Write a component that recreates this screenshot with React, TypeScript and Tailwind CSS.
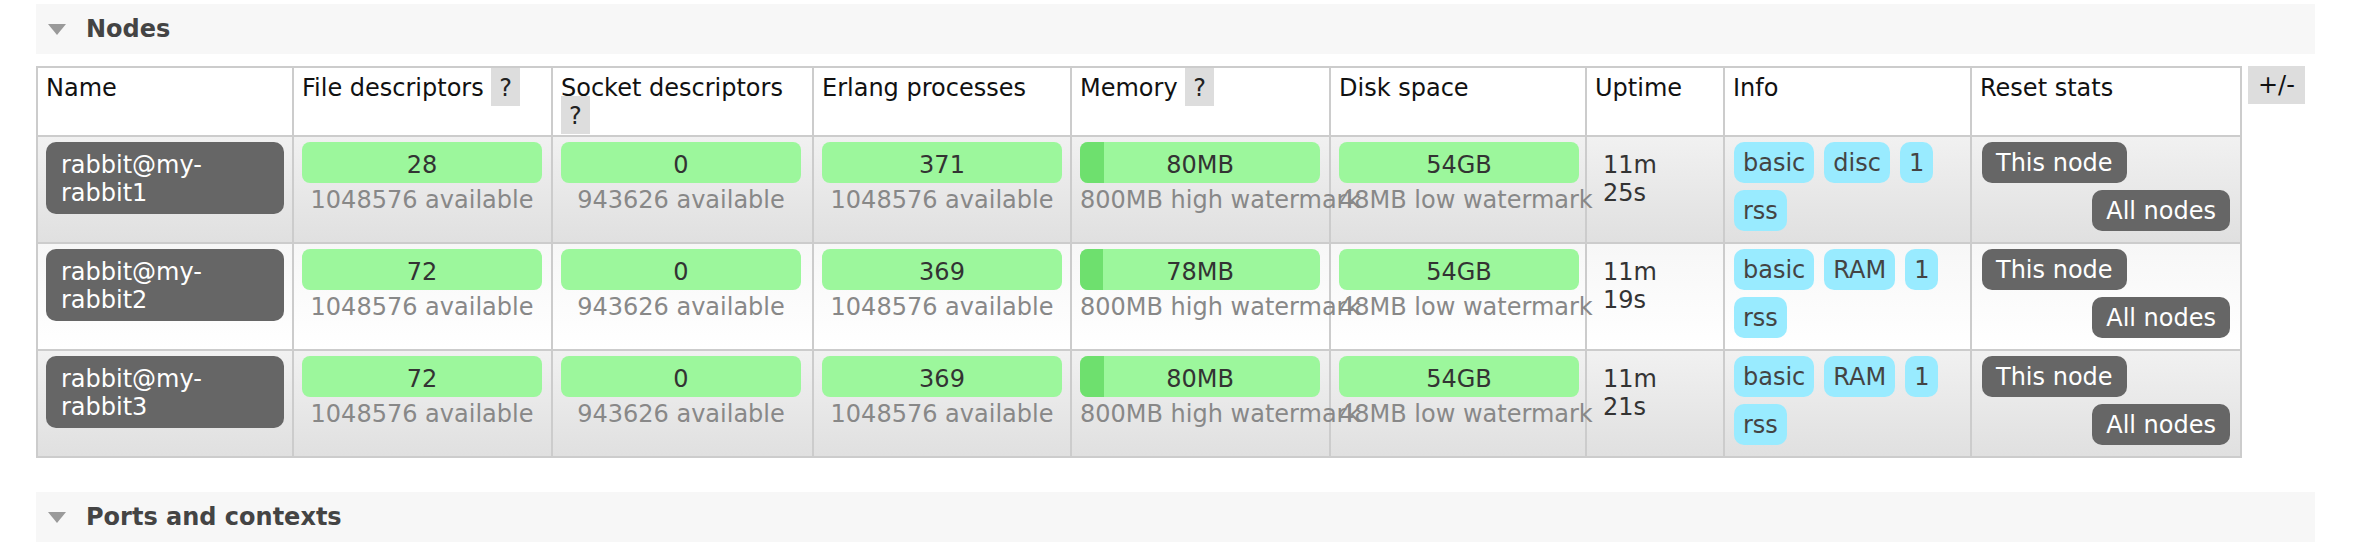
import React from 'react';

type NodeRow = {
  name: string;
  fd: string;
  sockets: string;
  procs: string;
  mem: string;
  memFill: number;
  disk: string;
  uptime: [string, string];
  info: string[];
};

const nodes: NodeRow[] = [
  { name: 'rabbit@my-rabbit1', fd: '28', sockets: '0', procs: '371', mem: '80MB', memFill: 10, disk: '54GB', uptime: ['11m', '25s'], info: ['basic', 'disc', '1', 'rss'] },
  { name: 'rabbit@my-rabbit2', fd: '72', sockets: '0', procs: '369', mem: '78MB', memFill: 9.75, disk: '54GB', uptime: ['11m', '19s'], info: ['basic', 'RAM', '1', 'rss'] },
  { name: 'rabbit@my-rabbit3', fd: '72', sockets: '0', procs: '369', mem: '80MB', memFill: 10, disk: '54GB', uptime: ['11m', '21s'], info: ['basic', 'RAM', '1', 'rss'] },
];

const SectionTitle = ({ title }: { title: string }) => (
  <div className="flex items-center h-[50px] w-[2279px] bg-[#f7f7f7] pl-[12px]">
    <svg width="18" height="11" viewBox="0 0 18 11">
      <polygon points="0,0 18,0 9,11" fill="#9a9a9a" />
    </svg>
    <h2 className="ml-[20px] text-[24px] leading-[28px] font-bold text-[#444]">{title}</h2>
  </div>
);

const Help = () => (
  <span className="bg-[#ddd] px-[8px] pt-[6px] pb-[4px] text-[#222]">?</span>
);

const Bar = ({ value, sub, fill }: { value: string; sub: string; fill?: number }) => (
  <div className="w-[240px]">
    <div className="relative h-[41px] rounded-[8px] bg-[#9cf79c] overflow-hidden">
      {fill !== undefined && (
        <div className="absolute left-0 top-0 h-full bg-[#6ee06e]" style={{ width: `${fill}%` }} />
      )}
      <div className="relative pt-[9px] text-center text-[#333]">{value}</div>
    </div>
    <div className="mt-[3px] text-center whitespace-nowrap text-[#888]">{sub}</div>
  </div>
);

const cell = 'border-r-2 border-[#ccc]';
const cols = 'grid grid-cols-[256px_259px_261px_258px_259px_256px_138px_247px_270px]';

export default function App() {
  return (
    <div className="w-[2368px] h-[542px] overflow-hidden bg-white pt-[4px] pl-[36px] font-['DejaVu_Sans',sans-serif] text-[24px] leading-[28px]">
      <SectionTitle title="Nodes" />

      <div className="mt-[12px] flex items-start gap-[6px]">
        <div className="border-l-2 border-t-2 border-[#ccc]">
          <div className={`${cols} h-[69px] bg-white border-b-2 border-[#ccc] text-[#111]`}>
            <div className={`${cell} px-2 pt-[6px]`}>Name</div>
            <div className={`${cell} px-2 pt-[6px]`}>File descriptors <Help /></div>
            <div className={`${cell} px-2 pt-[6px]`}>Socket descriptors <Help /></div>
            <div className={`${cell} px-2 pt-[6px]`}>Erlang processes</div>
            <div className={`${cell} px-2 pt-[6px]`}>Memory <Help /></div>
            <div className={`${cell} px-2 pt-[6px]`}>Disk space</div>
            <div className={`${cell} px-2 pt-[6px]`}>Uptime</div>
            <div className={`${cell} px-2 pt-[6px]`}>Info</div>
            <div className={`${cell} px-2 pt-[6px]`}>Reset stats</div>
          </div>

          {nodes.map((n, i) => (
            <div
              key={n.name}
              className={`${cols} h-[107px] border-b-2 border-[#ccc] bg-linear-to-b ${
                i % 2 === 0 ? 'from-[#f1f1f1] to-[#e0e0e0]' : 'from-[#f7f7f7] to-white'
              }`}
            >
              <div className={`${cell} pl-2 pt-[5px]`}>
                <div className="w-[238px] rounded-[10px] bg-[#666] text-white pl-[15px] pr-[10px] pt-[9px] pb-[7px]">
                  {n.name}
                </div>
              </div>
              <div className={`${cell} pl-2 pt-[5px]`}>
                <Bar value={n.fd} sub="1048576 available" />
              </div>
              <div className={`${cell} pl-2 pt-[5px]`}>
                <Bar value={n.sockets} sub="943626 available" />
              </div>
              <div className={`${cell} pl-2 pt-[5px]`}>
                <Bar value={n.procs} sub="1048576 available" />
              </div>
              <div className={`${cell} pl-2 pt-[5px]`}>
                <Bar value={n.mem} sub="800MB high watermark" fill={n.memFill} />
              </div>
              <div className={`${cell} pl-2 pt-[5px]`}>
                <Bar value={n.disk} sub="48MB low watermark" />
              </div>
              <div className={`${cell} pl-[16px] pt-[14px] text-[#333]`}>
                <div>{n.uptime[0]}</div>
                <div>{n.uptime[1]}</div>
              </div>
              <div className={`${cell} pl-[9px] pr-1 pt-[5px]`}>
                <div className="flex flex-wrap gap-x-[10px] gap-y-[7px]">
                  {n.info.map((t) => (
                    <span key={t} className="h-[41px] rounded-[10px] bg-[#99ebff] px-[9px] pt-[7px] text-[#444]">
                      {t}
                    </span>
                  ))}
                </div>
              </div>
              <div className={`${cell} flex flex-col gap-[7px] pl-[10px] pr-[10px] pt-[5px]`}>
                <button className="self-start h-[41px] rounded-[10px] bg-[#666] px-[14px] pt-[1px] text-white">
                  This node
                </button>
                <button className="self-end h-[41px] rounded-[10px] bg-[#666] px-[14px] pt-[1px] text-white">
                  All nodes
                </button>
              </div>
            </div>
          ))}
        </div>

        <div className="h-[38px] bg-[#ddd] px-[10px] pt-[5px] text-[#111]">+/-</div>
      </div>

      <div className="mt-[34px]">
        <SectionTitle title="Ports and contexts" />
      </div>
    </div>
  );
}
